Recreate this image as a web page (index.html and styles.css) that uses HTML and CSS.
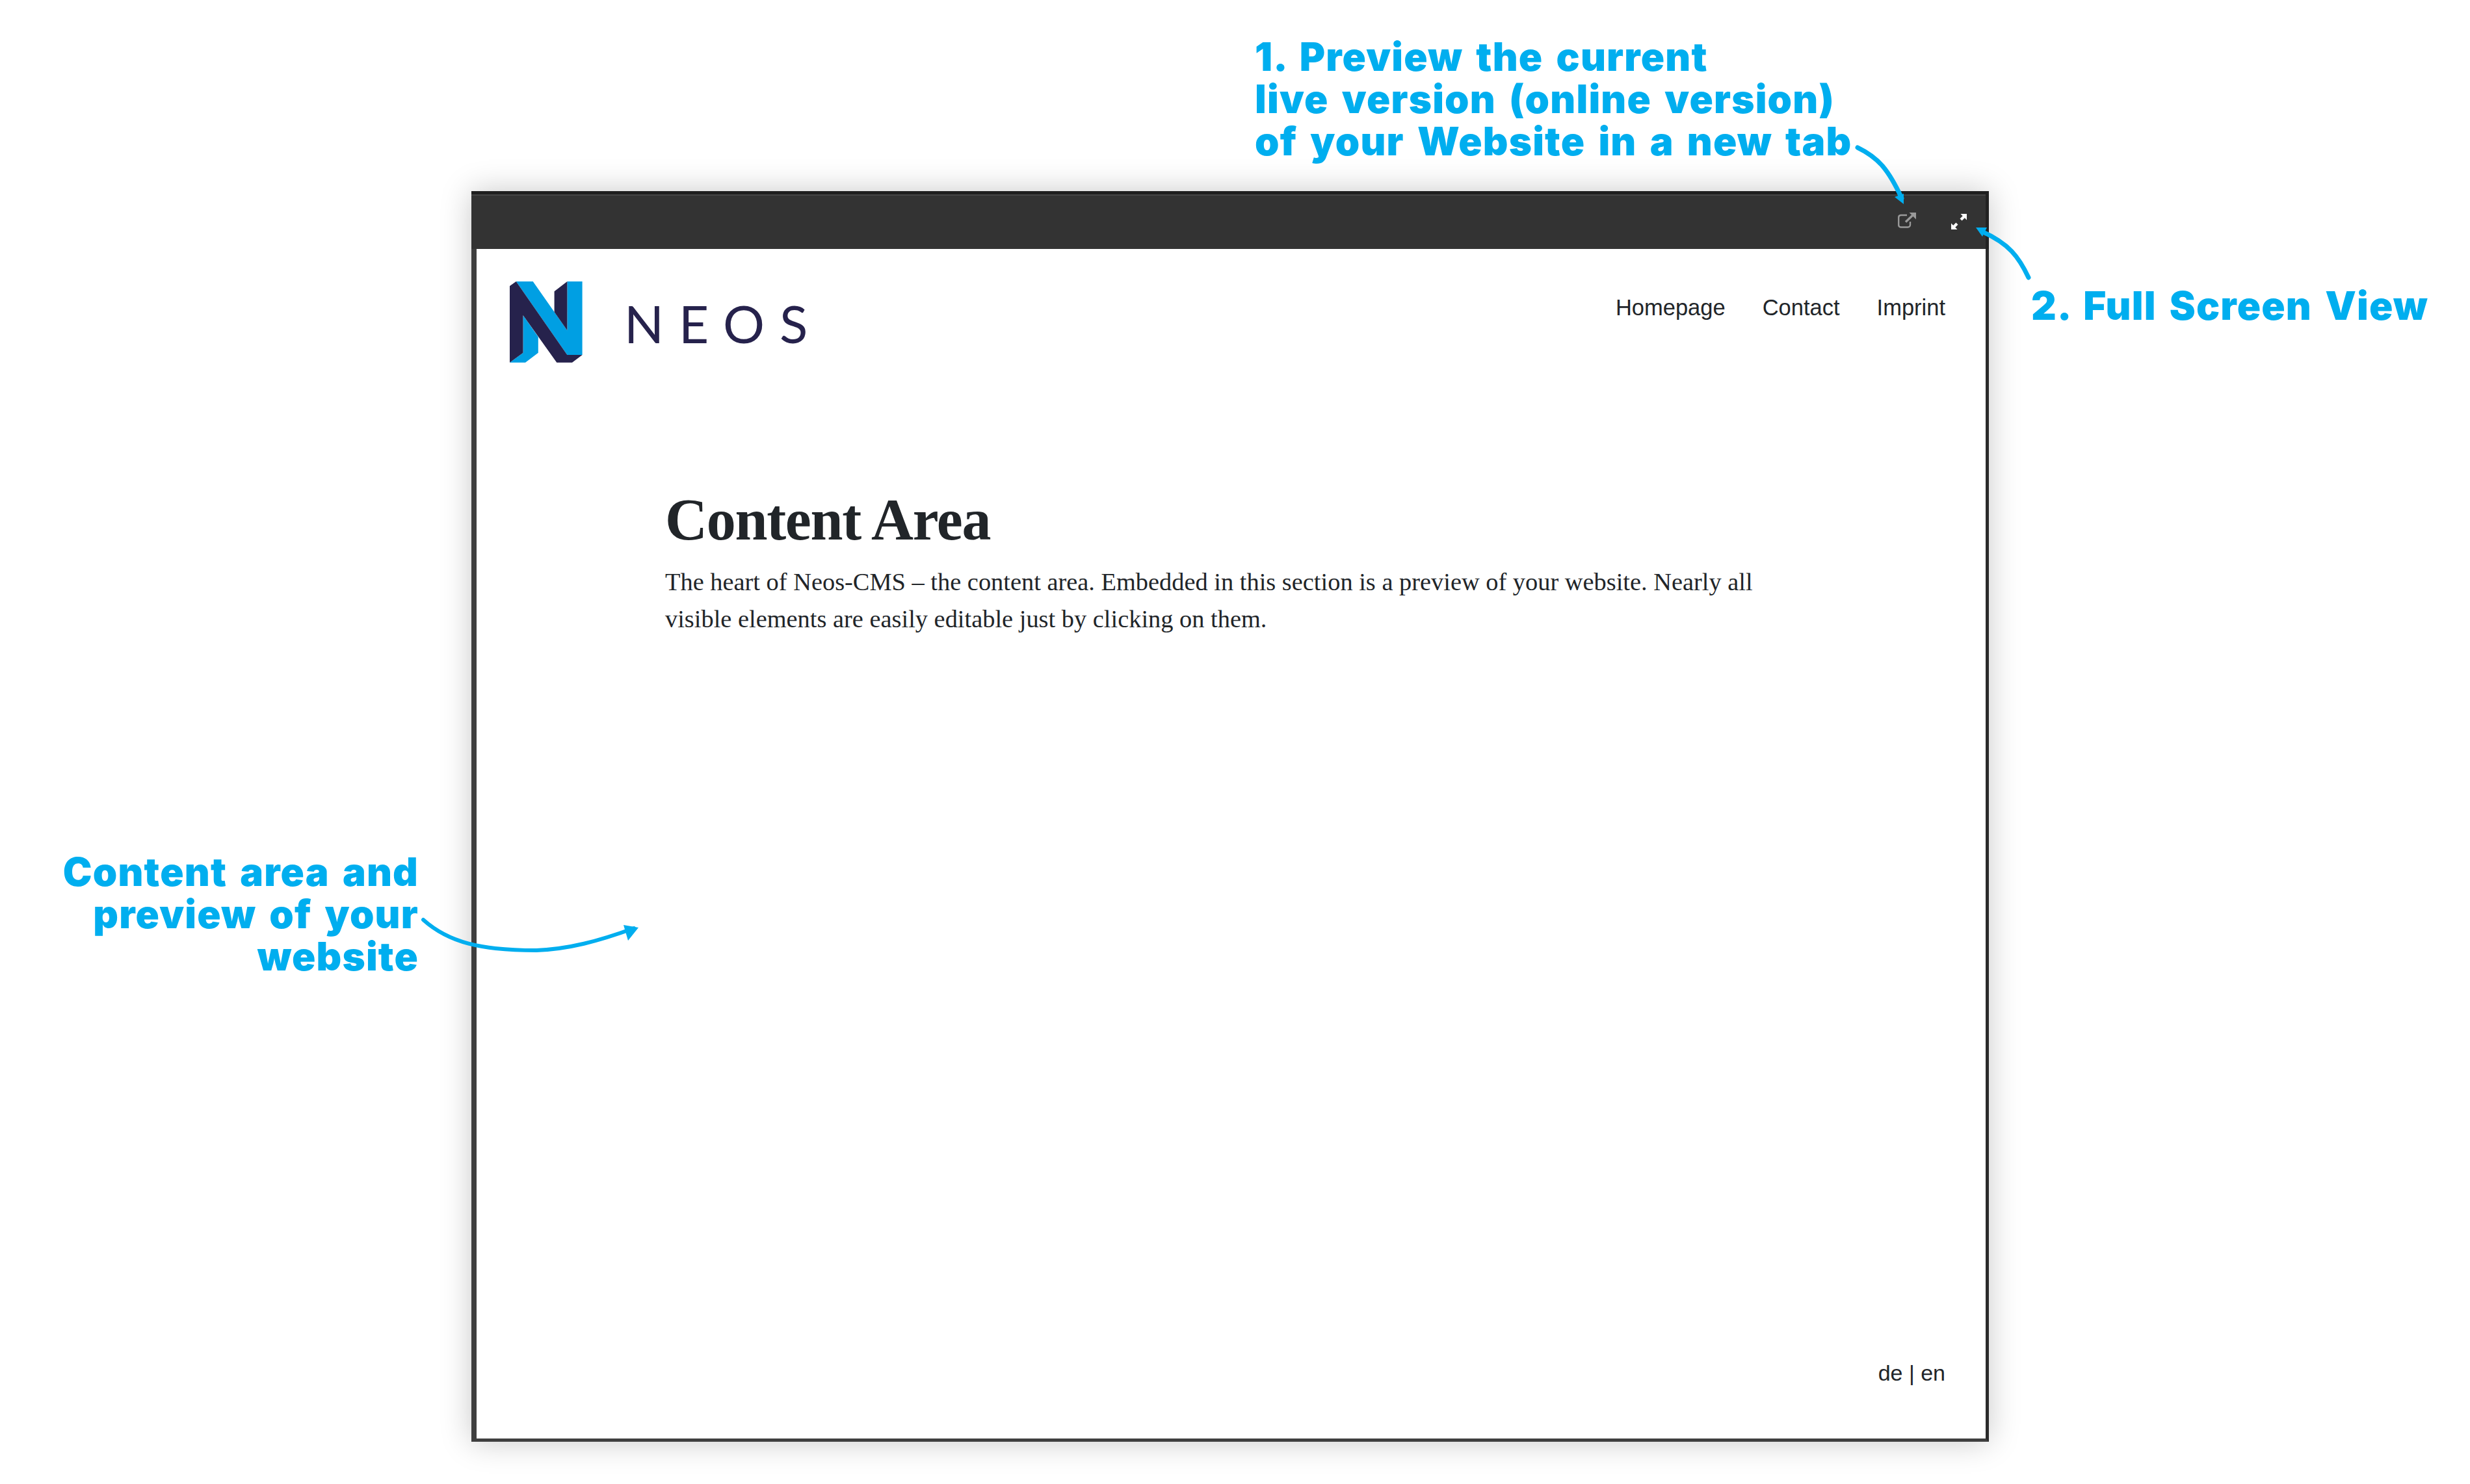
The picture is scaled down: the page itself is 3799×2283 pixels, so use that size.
FILE: index.html
```html
<!DOCTYPE html>
<html lang="en">
<head>
  <meta charset="UTF-8">
  <title>Neos content area</title>
  <link rel="stylesheet" href="styles.css">
</head>
<body>
  <!-- Preview frame -->
  <div class="frame">
    <div class="toolbar">
      <svg class="tool-icon tool-icon-preview" width="28" height="24" viewBox="0 0 28 24" fill="none" stroke="#999" stroke-width="2.4">
        <path d="M19 14v5a3.5 3.5 0 0 1-3.500 3.500H4.500A3.500 3.500 0 0 1 1.200 19V7.500A3.500 3.500 0 0 1 4.500 4H14"/>
        <path d="M12 14.500L23 4" stroke-width="3.400"/>
        <path d="M17.500 0H28V10.500Z" fill="#999" stroke="none"/>
      </svg>
      <svg class="tool-icon" width="24" height="24" viewBox="0 0 24 24" fill="#fff">
        <path d="M14.500 0H24V9.500L20.800 6.300L16.600 10.500L13.500 7.400L17.700 3.200Z"/>
        <path d="M9.500 24H0V14.500L3.200 17.700L7.400 13.500L10.500 16.600L6.300 20.800Z"/>
      </svg>
    </div>

    <div class="site">
      <header class="site-header">
        <div class="logo">
          <svg width="112" height="125" viewBox="0 0 112 125">
            <path fill="#009fe3" d="M9.800 0H35.700L88.400 75.300V0H111.600V113H88.400Z"/>
            <path fill="#009fe3" d="M20.500 52L43.800 85.300V109.700L24 124.700H0L20.500 109.700Z"/>
            <path fill="#26224c" d="M0 7L9.800 0L88.400 113H111.600L96 124.700H72.300L20.500 52V109.700L0 124.700Z"/>
            <path fill="#26224c" d="M68.600 15.300L88.400 0V75.300L68.600 47Z"/>
          </svg>
          <span class="logo-name">NEOS</span>
        </div>
        <nav class="nav">
          <a>Homepage</a>
          <a>Contact</a>
          <a>Imprint</a>
        </nav>
      </header>

      <main class="content">
        <h1>Content Area</h1>
        <p>The heart of Neos-CMS – the content area. Embedded in this section is a preview of your website. Nearly all visible elements are easily editable just by clicking on them.</p>
      </main>

      <footer class="lang">de | en</footer>
    </div>
  </div>

  <!-- Annotations -->
  <div class="note note-preview">1. Preview the current<br>live version (online version)<br>of your Website in a new tab</div>
  <div class="note note-full">2. Full Screen View</div>
  <div class="note note-content">Content area and<br>preview of your<br>website</div>

  <svg class="arrows" width="3799" height="2283" viewBox="0 0 3799 2283">
    <g fill="none" stroke="#00aeef" stroke-width="7" stroke-linecap="round">
      <path d="M2857 227C2890 243 2905 262 2925 305"/>
      <path d="M3120 427C3105 395 3090 375 3048 356"/>
      <path d="M651 1415C690 1450 740 1462 825 1462C875 1460 920 1448 975 1428" stroke-width="6"/>
    </g>
    <g fill="#00aeef">
      <path d="M2928 314L2914 303L2928 298Z"/>
      <path d="M3039 350L3056 350L3049 364Z"/>
      <path d="M982 1427L959 1423L966 1447Z"/>
    </g>
  </svg>
</body>
</html>
```

FILE: styles.css
```css
/* General Styles */
body {
  margin: 0;
  min-height: 2283px;
  padding: 294px 0 0 725px;
  box-sizing: border-box;
  background: #fff;
  position: relative;
  overflow: hidden;
}

/* Frame */
.frame {
  width: 2334px;
  height: 1924px;
  display: flex;
  flex-direction: column;
  box-shadow: 0 0 45px rgba(0, 0, 0, 0.22);
}

.toolbar {
  height: 89px;
  flex: none;
  display: flex;
  justify-content: flex-end;
  align-items: center;
  gap: 54px;
  padding: 0 29px 0 0;
  box-sizing: border-box;
  background: #333;
  border-top: 5px solid #1f1f1f;
  border-right: 5px solid #222;
  box-shadow: inset 0 2px 0 #454545;
}

.tool-icon {
  flex: none;
}

.tool-icon-preview {
  margin-bottom: 4px;
}

.site {
  flex: 1;
  display: flex;
  flex-direction: column;
  background: #fff;
  border-left: 8px solid #3f3f3f;
  border-right: 5px solid #2b2b2b;
  border-bottom: 5px solid #3f3f3f;
  color: #212529;
}

/* Site header */
.site-header {
  display: flex;
  justify-content: space-between;
  align-items: flex-start;
  padding: 50px 62px 0 51px;
}

.logo {
  display: flex;
  align-items: center;
  gap: 64px;
}

.logo-name {
  font-family: "Lato", sans-serif;
  font-size: 80px;
  line-height: 1;
  letter-spacing: 23px;
  color: #26224c;
  padding-top: 2px;
}

.nav {
  display: flex;
  gap: 57px;
  margin-top: 16px;
  font-family: "Liberation Sans", sans-serif;
  font-size: 34.5px;
  line-height: 48px;
}

/* Content */
.content {
  flex: 1;
  padding: 188px 0 0 290px;
  width: 1720px;
  font-family: "Liberation Serif", serif;
}

.content h1 {
  margin: 0 0 14px;
  font-size: 90px;
  line-height: 107px;
  letter-spacing: -1.3px;
  font-weight: 700;
}

.content p {
  margin: 0;
  font-size: 38.4px;
  line-height: 57px;
}

.lang {
  align-self: flex-end;
  padding: 0 62px 77px 0;
  font-family: "Liberation Sans", sans-serif;
  font-size: 34px;
  line-height: 48px;
}

/* Annotations */
.note {
  position: absolute;
  font-family: "Inter", sans-serif;
  font-weight: 900;
  font-size: 60px;
  line-height: 65px;
  letter-spacing: 1.2px;
  word-spacing: 7px;
  color: #00aeef;
  white-space: nowrap;
}

.note-preview {
  left: 1930px;
  top: 55px;
}

.note-full {
  left: 3124px;
  top: 438px;
}

.note-content {
  right: 3155px;
  top: 1309px;
  text-align: right;
}

.arrows {
  position: absolute;
  top: 0;
  left: 0;
  pointer-events: none;
}
```
